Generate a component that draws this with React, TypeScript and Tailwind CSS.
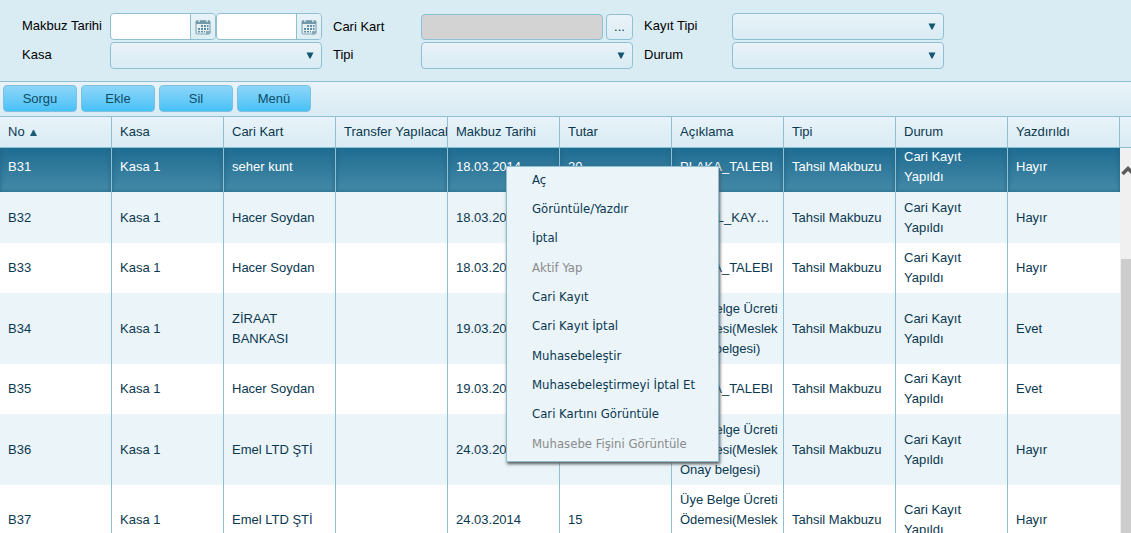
import { useState } from 'react';
import clsx from 'clsx';

type Row = {
  no: string;
  cari: string;
  date: string;
  amount: string;
  desc: string;
  printed: string;
  height: string;
};

const columns = [
  'No',
  'Kasa',
  'Cari Kart',
  'Transfer Yapılacak',
  'Makbuz Tarihi',
  'Tutar',
  'Açıklama',
  'Tipi',
  'Durum',
  'Yazdırıldı',
];

const rows: Row[] = [
  { no: 'B31', cari: 'seher kunt', date: '18.03.2014', amount: '20', desc: 'PLAKA_TALEBI', printed: 'Hayır', height: 'h-[50px]' },
  { no: 'B32', cari: 'Hacer Soydan', date: '18.03.2014', amount: '20', desc: 'GENEL_KAY…', printed: 'Hayır', height: 'h-[51px]' },
  { no: 'B33', cari: 'Hacer Soydan', date: '18.03.2014', amount: '20', desc: 'PLAKA_TALEBI', printed: 'Hayır', height: 'h-[50px]' },
  { no: 'B34', cari: 'ZİRAAT BANKASI', date: '19.03.2014', amount: '15', desc: 'Üye Belge Ücreti Ödemesi(Meslek Onay belgesi)', printed: 'Evet', height: 'h-[71px]' },
  { no: 'B35', cari: 'Hacer Soydan', date: '19.03.2014', amount: '20', desc: 'PLAKA_TALEBI', printed: 'Evet', height: 'h-[50px]' },
  { no: 'B36', cari: 'Emel LTD ŞTİ', date: '24.03.2014', amount: '15', desc: 'Üye Belge Ücreti Ödemesi(Meslek Onay belgesi)', printed: 'Hayır', height: 'h-[71px]' },
  { no: 'B37', cari: 'Emel LTD ŞTİ', date: '24.03.2014', amount: '15', desc: 'Üye Belge Ücreti Ödemesi(Meslek Onay belgesi)', printed: 'Hayır', height: 'h-[70px]' },
];

const menuItems = [
  { label: 'Aç' },
  { label: 'Görüntüle/Yazdır' },
  { label: 'İptal' },
  { label: 'Aktif Yap', disabled: true },
  { label: 'Cari Kayıt' },
  { label: 'Cari Kayıt İptal' },
  { label: 'Muhasebeleştir' },
  { label: 'Muhasebeleştirmeyi İptal Et' },
  { label: 'Cari Kartını Görüntüle' },
  { label: 'Muhasebe Fişini Görüntüle', disabled: true },
];

function CalendarIcon() {
  return (
    <svg width="16" height="16" viewBox="0 0 16 16" aria-hidden="true">
      <rect x="1" y="1.500" width="14" height="13.500" rx="1.500" fill="#e6f0f4" stroke="#86a9b8" strokeWidth="1.200" />
      <path d="M1 2h14v3H1z" fill="#6f98aa" />
      <path d="M3 1h2v2H3zM11 1h2v2h-2z" fill="#c3d8e1" />
      <path
        d="M6 6h2v2H6zM9 6h2v2H9zM12 6h1.500v2H12zM3 9h2v2H3zM6 9h2v2H6zM9 9h2v2H9zM12 9h1.500v2H12zM3 12h2v1.500H3zM6 12h2v1.500H6zM9 12h1v1.500H9z"
        fill="#5f8da2"
      />
      <path d="M11 15.500v-3.500h4.500v1l-2.500 2.500z" fill="#86a9b8" />
    </svg>
  );
}

function DateField({ label, id }: { label: string; id: string }) {
  return (
    <div className="flex h-[27px] flex-1 rounded border border-[#8fbfd2] bg-white">
      <input id={id} aria-label={label} type="text" className="w-0 flex-1 rounded-l px-1 outline-none" />
      <button
        type="button"
        aria-label="Takvim"
        className="flex w-[25px] items-center justify-center rounded-r border-l border-[#8fbfd2] bg-linear-to-b from-[#e9f3f9] to-[#dcedf4]"
      >
        <CalendarIcon />
      </button>
    </div>
  );
}

function SelectField({ id }: { id: string }) {
  return (
    <div className="relative">
      <select
        id={id}
        className="block h-[27px] w-full appearance-none rounded border border-[#8fbfd2] bg-linear-to-b from-[#e9f3f9] to-[#d9ebf3] px-2 outline-none"
      >
        <option value=""></option>
      </select>
      <svg width="8" height="7" viewBox="0 0 8 7" className="pointer-events-none absolute top-[10px] right-2" aria-hidden="true">
        <path d="M0.500 0.500h7L4.500 6.500h-1z" fill="#135872" />
      </svg>
    </div>
  );
}

function Filters() {
  return (
    <form className="grid grid-cols-[88px_212px_11px_88px_212px_11px_88px_212px] items-center gap-y-[2px] border-b border-[#8fbfd2] bg-[#d9ebf3] pt-[13px] pb-[12px] pl-[22px] text-black">
      <label htmlFor="dateFrom" className="pb-[2px]">Makbuz Tarihi</label>
      <div className="flex">
        <DateField id="dateFrom" label="Makbuz Tarihi" />
        <DateField id="dateTo" label="Makbuz Tarihi (bitiş)" />
      </div>
      <span />
      <label htmlFor="card">Cari Kart</label>
      <div className="flex gap-[3px]">
        <input id="card" type="text" disabled className="h-[26px] w-0 flex-1 rounded border border-[#8fbfd2] bg-[#d3d3d3]" />
        <button type="button" className="h-[26px] w-[27px] rounded border border-[#8fbfd2] bg-linear-to-b from-[#e9f3f9] to-[#dcedf4] text-[#0a3850]">
          ...
        </button>
      </div>
      <span />
      <label htmlFor="recordType" className="pb-[2px]">Kayıt Tipi</label>
      <SelectField id="recordType" />

      <label htmlFor="kasa" className="pb-[2px]">Kasa</label>
      <SelectField id="kasa" />
      <span />
      <label htmlFor="type" className="pb-[2px]">Tipi</label>
      <SelectField id="type" />
      <span />
      <label htmlFor="status" className="pb-[2px]">Durum</label>
      <SelectField id="status" />
    </form>
  );
}

function Toolbar() {
  return (
    <div className="flex gap-1 border-b border-[#8fbfd2] bg-linear-to-b from-[#e9f3f9] to-[#d9ebf3] px-[3px] pt-[3px] pb-1">
      {['Sorgu', 'Ekle', 'Sil', 'Menü'].map((label) => (
        <button
          key={label}
          type="button"
          className="h-[27px] w-[74px] rounded-sm border border-[#7fc0dc] bg-linear-to-b from-[#8bd6f8] to-[#45c1f7] text-[#0f4c68]"
        >
          {label}
        </button>
      ))}
    </div>
  );
}

function ContextMenu() {
  return (
    <ul
      role="menu"
      className="absolute top-[166px] left-[506px] grid h-[296px] w-[213px] grid-rows-10 border border-[#8fbfd2] bg-[#eaf4f9] pb-px font-['DejaVu_Sans_Condensed','DejaVu_Sans',sans-serif] text-[13px] shadow-[1px_2px_3px_#555]"
    >
      {menuItems.map((item) => (
        <li key={item.label} role="none" className="flex">
          <button
            type="button"
            role="menuitem"
            disabled={item.disabled}
            className="flex-1 pb-1 pl-[25px] text-left whitespace-nowrap text-[#0a3850] disabled:text-[#8a8a8a]"
          >
            {item.label}
          </button>
        </li>
      ))}
    </ul>
  );
}

function App() {
  const [selected, setSelected] = useState('B31');

  return (
    <div className="relative flex h-screen flex-col overflow-hidden bg-white font-['Liberation_Sans',Arial,sans-serif] text-[13px] text-[#0a3850]">
      <Filters />
      <Toolbar />

      <div className="flex border-b border-[#8fbfd2] bg-linear-to-b from-[#e9f3f9] to-[#d9ebf3]">
        <table className="w-0 flex-1 table-fixed border-separate border-spacing-0" aria-label="Makbuz başlıkları">
          <thead>
            <tr className="h-[30px]">
              {columns.map((name, i) => (
                <th key={name} className="overflow-hidden border-r border-[#8fbfd2] pl-2 text-left font-normal whitespace-nowrap">
                  {name}
                  {i === 0 && (
                    <svg width="7" height="6" viewBox="0 0 7 6" className="ml-[5px] inline-block" aria-hidden="true">
                      <path d="M0 6h7L4 0H3z" fill="#1b5d77" />
                    </svg>
                  )}
                </th>
              ))}
            </tr>
          </thead>
        </table>
        <div className="w-[11px]" />
      </div>

      <div className="flex min-h-0 flex-1">
        <div className="min-w-0 flex-1 overflow-hidden">
          {/* list is scrolled down a few pixels */}
          <table className="-mt-[6px] w-full table-fixed border-separate border-spacing-0 leading-5" aria-label="Makbuzlar">
            <tbody>
              {rows.map((row, i) => (
                <tr
                  key={row.no}
                  onClick={() => setSelected(row.no)}
                  className={clsx(
                    row.height,
                    row.no === selected
                      ? 'bg-linear-to-b from-[#17688e] to-[#458aa8] text-white'
                      : i % 2 ? 'bg-[#eaf4f9]' : 'bg-white',
                  )}
                >
                  {[row.no, 'Kasa 1', row.cari, '', row.date, row.amount, row.desc, 'Tahsil Makbuzu', 'Cari Kayıt Yapıldı', row.printed].map((value, c) => (
                    <td
                      key={c}
                      className={clsx(
                        'overflow-hidden pl-2 align-middle',
                        c < 9 && 'border-r border-r-[#8fbfd2]',
                        c === 2 && 'pr-4',
                        c === 8 && 'pr-8',
                        row.no === selected && 'shadow-[inset_0_0_5px_#1f6685]',
                      )}
                    >
                      {value}
                    </td>
                  ))}
                </tr>
              ))}
            </tbody>
          </table>
        </div>
        <div className="w-[11px] overflow-hidden bg-[#f0f0f0]">
          <svg width="17" height="111" viewBox="0 0 17 111" className="block max-w-none" aria-hidden="true">
            <path d="M2.500 26L8 20.500L13.500 26" fill="none" stroke="#5a5a5a" strokeWidth="3.500" />
          </svg>
          <div className="ml-px h-full bg-[#cdcdcd]" />
        </div>
      </div>

      <ContextMenu />
    </div>
  );
}

export default App;
